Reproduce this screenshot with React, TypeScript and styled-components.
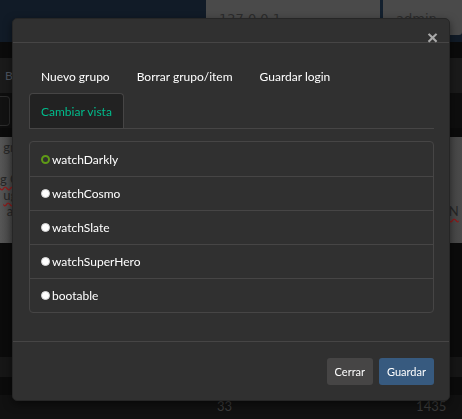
import React from "react";
import styled, { createGlobalStyle } from "styled-components";

const Global = createGlobalStyle`
  html, body { margin: 0; padding: 0; background: #0b0b0b; }
  body { font-family: Lato, "Open Sans", "Liberation Sans", sans-serif; overflow: hidden; }
  * { box-sizing: border-box; }
`;

const Page = styled.div`
  width: 462px;
  height: 419px;
  display: flex;
  flex-direction: column;
  background: #0b0b0b;
  color: #2a2a2a;
`;

const Navbar = styled.div`
  height: 42px;
  flex: none;
  background: #111b27;
  display: flex;
  align-items: flex-start;
  padding-left: 206px;
`;

const NavInput = styled.div<{ $w: number }>`
  width: ${(p) => p.$w}px;
  height: 35px;
  background: #4a4a4a;
  border-radius: 0 0 3px 3px;
  font-family: "DejaVu Sans", sans-serif;
  font-size: 13px;
  color: #2c2c2c;
  padding: 11px 0 0 13px;
`;

const NavDivider = styled.div`
  width: 3px;
  height: 35px;
  background: #13202e;
`;

const Band = styled.div<{ $h: number; $bg: string }>`
  height: ${(p) => p.$h}px;
  flex: none;
  background: ${(p) => p.$bg};
  display: flex;
  align-items: center;
  font-size: 12px;
  color: #4a4a4a;
`;

const BgLetter = styled.span`
  padding-left: 5px;
  color: #4e5560;
`;

const BgInput = styled.div`
  width: 10px;
  height: 30px;
  border: 1px solid #2c2c2c;
  border-left: none;
  border-radius: 0 4px 4px 0;
  background: #121212;
`;

const Panel = styled.div`
  height: 106px;
  flex: none;
  background: linear-gradient(90deg, #565656 0px, #474747 12px, #474747 450px, #4a4a4a);
  display: flex;
  justify-content: space-between;
  padding: 2px 0 0 0;
  font-size: 13px;
  color: #262626;
`;

const PanelCol = styled.div`
  display: flex;
  flex-direction: column;
  line-height: 16px;
`;

const Squiggle = styled.span`
  text-decoration: underline wavy #8a1a1a;
  text-underline-offset: 2px;
`;

const Stats = styled.div`
  height: 24px;
  flex: none;
  background: #111;
  display: flex;
  font-size: 13px;
  color: #3a3a3a;
  padding-top: 3px;
`;

/* ---------- modal ---------- */
const Modal = styled.div`
  position: fixed;
  left: 12px;
  top: 18px;
  width: 438px;
  background: #303030;
  border: 1px solid #262626;
  border-radius: 5px;
  box-shadow: 0 3px 9px rgba(0, 0, 0, 0.5);
  color: #fff;
  display: flex;
  flex-direction: column;
`;

const Header = styled.div`
  height: 24px;
  border-bottom: 1px solid #464545;
  display: flex;
  justify-content: flex-end;
  align-items: flex-end;
  padding-right: 11px;
`;

const Close = styled.span`
  font-family: "Liberation Sans", Arial, sans-serif;
  font-weight: bold;
  font-size: 19px;
  line-height: 19px;
  color: #a9a9a9;
  margin-bottom: -5px;
`;

const Body = styled.div`
  padding: 15px 15px 28px 16px;
  display: flex;
  flex-direction: column;
`;

const Tabs = styled.div`
  display: flex;
  flex-wrap: wrap;
  border-bottom: 1px solid #464545;
`;

const Tab = styled.div<{ $active?: boolean }>`
  height: 35px;
  display: flex;
  align-items: center;
  padding: 0 11px;
  margin-right: 3px;
  font-size: 12px;
  color: ${(p) => (p.$active ? "#00bc8c" : "#fff")};
  background: ${(p) => (p.$active ? "#222" : "transparent")};
  border: 1px solid ${(p) => (p.$active ? "#464545" : "transparent")};
  border-bottom: none;
  border-radius: 4px 4px 0 0;
`;

const List = styled.div`
  margin-top: 12px;
  border: 1px solid #464545;
  border-radius: 4px;
  display: flex;
  flex-direction: column;
`;

const Item = styled.div`
  height: 34px;
  display: flex;
  align-items: center;
  padding-left: 11px;
  font-size: 12px;
  color: #fff;
  & + & {
    border-top: 1px solid #464545;
  }
`;

const Radio = styled.span<{ $checked?: boolean }>`
  width: 9px;
  height: 9px;
  border-radius: 50%;
  flex: none;
  margin-right: 2px;
  background: ${(p) => (p.$checked ? "#303030" : "#fff")};
  border: ${(p) => (p.$checked ? "2px solid #5f9a16" : "1px solid #d8d8d8")};
`;

const Footer = styled.div`
  border-top: 1px solid #464545;
  padding: 16px 15px 15px;
  display: flex;
  justify-content: flex-end;
  gap: 6px;
`;

const Button = styled.button<{ $primary?: boolean }>`
  height: 27px;
  padding: 0 8px;
  border: none;
  border-radius: 3px;
  font-family: Lato, "Open Sans", sans-serif;
  font-size: 11px;
  color: #fff;
  background: ${(p) => (p.$primary ? "#375a7f" : "#464545")};
`;

const themes = ["watchDarkly", "watchCosmo", "watchSlate", "watchSuperHero", "bootable"];

export default function App() {
  return (
    <>
      <Global />
      <Page>
        <Navbar>
          <NavInput $w={174}>127.0.0.1</NavInput>
          <NavDivider />
          <NavInput $w={79}>admin</NavInput>
        </Navbar>
        <Band $h={16} $bg="#0b0b0b" />
        <Band $h={35} $bg="#1a1a1a">
          <BgLetter>B</BgLetter>
        </Band>
        <Band $h={35} $bg="#0e0e0e">
          <BgInput />
        </Band>
        <Band $h={9} $bg="#0b0b0b" />
        <Panel>
          <PanelCol>
            <span>&nbsp;gr</span>
            <span>&nbsp;</span>
            <span>
              <Squiggle>g C</Squiggle>
            </span>
            <span>
              &nbsp;<Squiggle>ug</Squiggle>
            </span>
            <span>&nbsp;&nbsp;as</span>
          </PanelCol>
          <PanelCol>
            <span>&nbsp;</span>
            <span>&nbsp;</span>
            <span>&nbsp;</span>
            <span>&nbsp;</span>
            <span>
              <Squiggle>N</Squiggle>&nbsp;
            </span>
          </PanelCol>
        </Panel>
        <Band $h={114} $bg="#0b0b0b" />
        <Band $h={20} $bg="#161616" />
        <Band $h={18} $bg="#0b0b0b" />
        <Stats>
          <span style={{ marginLeft: 217 }}>33</span>
          <span style={{ marginLeft: 184 }}>1435</span>
        </Stats>
      </Page>

      <Modal>
        <Header>
          <Close>×</Close>
        </Header>
        <Body>
          <Tabs>
            <Tab>Nuevo grupo</Tab>
            <Tab>Borrar grupo/item</Tab>
            <Tab>Guardar login</Tab>
            <Tab $active>Cambiar vista</Tab>
          </Tabs>
          <List>
            {themes.map((t, i) => (
              <Item key={t}>
                <Radio $checked={i === 0} />
                {t}
              </Item>
            ))}
          </List>
        </Body>
        <Footer>
          <Button>Cerrar</Button>
          <Button $primary>Guardar</Button>
        </Footer>
      </Modal>
    </>
  );
}
